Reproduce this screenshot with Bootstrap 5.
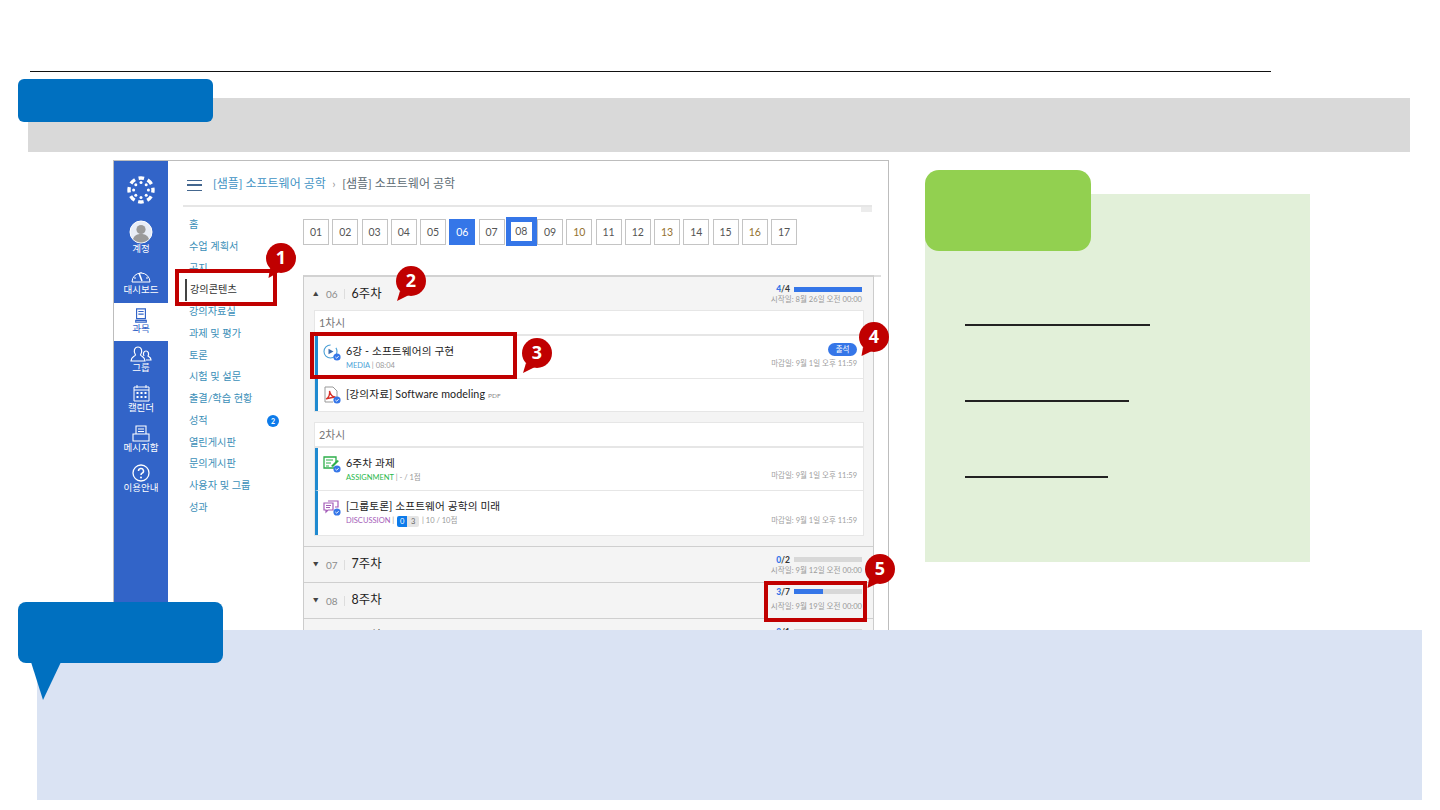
<!DOCTYPE html>
<html lang="ko">
<head>
<meta charset="utf-8">
<title>강의콘텐츠 안내</title>
<link href="https://cdn.jsdelivr.net/npm/bootstrap@5.3.0/dist/css/bootstrap.min.css" rel="stylesheet">
<style>
html,body{margin:0;background:#fff}
body{font-family:Lato,"Noto Sans CJK KR","Noto Sans",sans-serif;overflow:hidden}
.slide{width:1440px;height:810px;overflow:hidden}
.rule-top{left:30px;top:71px;width:1241px;height:1px;background:#111}
.band{left:28px;top:98px;width:1382px;height:54px;background:#d9d9d9}
.tab-blue{left:18px;top:79px;width:195px;height:43px;background:#0070c0;border-radius:6px}
.shot{left:113px;top:160px;width:776px;height:640px;border:1px solid #bdbdbd;background:#fff;overflow:hidden}
.rail{width:54px;flex:none;background:#3264c8;color:#fff;font-size:9.5px;line-height:12px;padding-top:15px;height:100%}
.rail-logo{height:44px}
.rail-item svg{display:block;flex:none}
.ri-acc{height:49px}
.ri-acc span{margin-top:-1px}
.ri-dash{height:34px}
.ri-on{height:38px;background:#fff;color:#3264c8;padding-top:5px}
.ri-grp{height:43px;padding-top:5px}
.ri-cal{height:41px}
.ri-msg{height:39px}
.rail-main{flex:1;min-width:0}
.crumb-bar{height:46px;margin-left:15px;width:689px;border-bottom:2px solid #e6e6e6;font-size:12px;line-height:18px;color:#5c6b73;padding:14px 0 0 4px;position:relative}
.crumb-bar a{color:#3f93c4;text-decoration:none}
.crumb-bar i{font-style:normal;color:#999;margin:0 6.5px}
.burger{width:15px;height:11px;margin:5px 11px 0 0;border-top:1.5px solid #44678f;border-bottom:1.5px solid #44678f}
.burger::after{content:"";display:block;height:1.5px;background:#44678f;margin-top:3.3px}
.crumb-chip{position:absolute;right:0;bottom:-7px;width:11px;height:5px;background:#ececec}
.side{width:135px;flex:none;padding:7px 0 0 17px;position:relative}
.side .nav-link{height:21.77px;padding:0 0 0 4px;line-height:21.77px;font-size:10.2px;color:#3b8fb8;position:relative}
.side .nav-link.cur{color:#333;border-left:2px solid #444;padding-left:3px}
.side .count{position:absolute;left:82px;top:5px;width:12px;height:12px;padding:0;border-radius:50%;background:#0d7bea;font-size:7px;line-height:12px}
.body-col{width:578px;flex:none;padding-top:12px}
.weeks{gap:3.25px;height:56px}
.wk{width:26px;height:26px;border:1px solid #c4c4c4;font-size:10.5px;line-height:24px;text-align:center;color:#555;background:#fff;padding:0;border-radius:0}
.wk.warm{color:#94722f}
.wk.now{background:#3576e8;border-color:#3576e8;color:#fff}
.wk.mark{box-sizing:content-box;width:21px;height:19px;border:5px solid #3576e8;margin:-2px -3px 0 -2px;line-height:19px}
.panel{width:571px;background:#f4f4f4;border-left:1px solid #ccc;border-right:1px solid #ccc;border-top:2px solid #d2d2d2;position:relative}
.panel::before{content:"";position:absolute;left:570px;top:-2px;width:7px;height:2px;background:#e0e0e0}
.wk-head{height:32px;padding:2px 11px 0 9px}
.wk-row{height:36px;border-top:1px solid #cfcfcf;padding:0 11px 0 9px}
.wk-row.spaced{margin-top:10px}
.tri{font-size:5.5px;color:#444;width:13px}
.wk-no{font-size:10px;color:#8c8c8c;padding-right:6px;border-right:1px solid #ddd;line-height:10px;margin-right:7px}
.wk-name{font-size:12.4px;color:#222}
.stat{width:100px;text-align:right}
.stat-top{gap:4px;font-size:8.5px;line-height:10px;color:#333;font-weight:700}
.stat-top b{color:#3576e8}
.stat .progress{width:68px;height:5px;border-radius:0;background:#d8d8d8}
.stat .progress-bar{background:#3576e8}
.stat small{display:block;font-size:7.6px;line-height:10px;color:#9a9a9a;white-space:nowrap}
.stat.tall{padding-bottom:4px}
.stat.tall small{margin-top:4px}
.lesson{margin:1px 10px 0 10px;width:550px;border:1px solid #e6e6e6;border-radius:0}
.lesson + .lesson{margin-top:10px}
.lesson-head{height:24px;font-size:10.8px;line-height:24px;color:#777;padding-left:4px;background:#fff;border-bottom:1px solid #e6e6e6}
.lesson .list-group-item{border-left:3px solid #1f8ad0;border-right:0;border-top:0;border-bottom:1px solid #e6e6e6;padding:0 6px 0 4px;border-radius:0;display:flex;gap:4px}
.lesson .list-group-item:last-child{border-bottom:0}
.h43{height:43px}.h32{height:32px}.h45{height:44px}
.it-icon{width:20px;height:20px;flex:none;margin-top:7px}
.it-main{flex:1;padding-top:7px}
.it-title{font-size:10.7px;line-height:15px;color:#222;letter-spacing:.1px}
.it-title small{font-size:6.5px;color:#888}
.it-meta{font-size:7.5px;line-height:15px;color:#999}
.t-media{color:#4a9fd6}.t-asg{color:#1fb84a}.t-dis{color:#a45cb8}
.cnt{display:inline-flex;vertical-align:middle;font-size:7.5px;line-height:11px;margin:0 1px}
.cnt b{background:#0d7bea;color:#fff;width:10px;text-align:center;font-weight:400;border-radius:2px 0 0 2px}
.cnt span{background:#e5e5e5;color:#666;width:12px;text-align:center;border-radius:0 2px 2px 0}
.it-side{text-align:right;align-self:flex-end;font-size:7.5px;line-height:14px;color:#a0a0a0;padding-bottom:7px;white-space:nowrap}
.attend{background:#3576e8;font-size:7.5px;line-height:10px;padding:1.500px 7.500px;display:inline-block;border-radius:8px;margin-bottom:1px;font-weight:400}
.box{border:4px solid #c00000;background:transparent}
.box1{left:175px;top:269px;width:102px;height:37px}
.box3{left:310px;top:332px;width:207px;height:47px}
.box5{left:764px;top:581px;width:103px;height:41px}
.pin{width:34px;height:42px}
.pin text{font:700 18px "Open Sans","Liberation Sans",sans-serif;fill:#fff;text-anchor:middle}
.p1{left:264px;top:241px}.p2{left:394px;top:264px}.p3{left:520px;top:336px}.p4{left:857px;top:320px}.p5{left:863px;top:552px}
.pane-green{left:925px;top:194px;width:385px;height:368px;background:#e2f0d9}
.tab-green{left:925px;top:170px;width:166px;height:81px;background:#92d050;border-radius:14px}
.stroke{left:40px;height:2px;background:#222}
.s1{top:130px;width:185px}.s2{top:206px;width:164px}.s3{top:282px;width:143px}
.pane-blue{left:37px;top:630px;width:1385px;height:170px;background:#dae3f3}
.say{left:18px;top:602px;width:205px;height:99px}
.say-box{width:205px;height:61px;background:#0070c0;border-radius:8px}
.say-tail{width:30px;height:38px;display:block;margin:-1px 0 0 13px}
</style>
</head>
<body>
<div class="slide position-relative">
  <div class="position-absolute rule-top"></div>
  <div class="position-absolute band"></div>
  <div class="position-absolute tab-blue"></div>

  <div class="position-absolute shot d-flex">
    <nav class="rail text-center">
      <div class="rail-logo d-flex justify-content-center">
        <svg width="28" height="28" viewBox="0 0 28 28"><circle cx="14" cy="14" r="12" fill="none" stroke="#fff" stroke-width="3.4" stroke-dasharray="5.6 3.82" stroke-dashoffset="2.8"/><g fill="#fff"><circle cx="14" cy="6.6" r="1.5"/><circle cx="14" cy="21.4" r="1.5"/><circle cx="6.6" cy="14" r="1.5"/><circle cx="21.4" cy="14" r="1.5"/><circle cx="8.8" cy="8.8" r="1.5"/><circle cx="19.2" cy="8.8" r="1.5"/><circle cx="8.8" cy="19.2" r="1.5"/><circle cx="19.2" cy="19.2" r="1.5"/></g></svg>
      </div>
      <div class="rail-item ri-acc d-flex flex-column align-items-center">
        <svg width="24" height="24" viewBox="0 0 24 24"><circle cx="12" cy="12" r="11" fill="#e8edf6" stroke="#fff"/><circle cx="12" cy="9.5" r="4.6" fill="#9a9a9a"/><path d="M4 19c1.5-4 4.500-5 8-5s6.500 1 8 5a11 11 0 0 1-16 0z" fill="#9a9a9a"/></svg>
        <span>계정</span>
      </div>
      <div class="rail-item ri-dash d-flex flex-column align-items-center">
        <svg width="22" height="15" viewBox="0 0 22 15"><path d="M2 13a9 9 0 1 1 18 0z" fill="none" stroke="#fff"/><path d="M9 4l3 8" stroke="#fff" stroke-width="1.5"/><path d="M4 9h2M16 9h2M11 3v1" stroke="#fff"/></svg>
        <span>대시보드</span>
      </div>
      <div class="rail-item ri-on d-flex flex-column align-items-center">
        <svg width="14" height="15" viewBox="0 0 14 17"><path d="M2 1h10v11H2zM1 14h12v2H1zM4 4h6M4 7h6" fill="none" stroke="#3264c8" stroke-width="1.3"/></svg>
        <span>과목</span>
      </div>
      <div class="rail-item ri-grp d-flex flex-column align-items-center">
        <svg width="22" height="16" viewBox="0 0 22 16"><path d="M1 15c0-4 3-4 4.500-6-2.500-4-1-8 2.500-8s5 4 2.500 8c1.500 2 4.500 2 4.500 6z" fill="none" stroke="#fff" stroke-width="1.2"/><path d="M14 10c-1.200-2-.5-5 2-5s3.200 3 2 5c1 1 3 1 3 4h-5" fill="none" stroke="#fff" stroke-width="1.2"/></svg>
        <span>그룹</span>
      </div>
      <div class="rail-item ri-cal d-flex flex-column align-items-center">
        <svg width="17" height="18" viewBox="0 0 17 18"><path d="M1 3h15v14H1zM1 6h15M4 1v3M13 1v3" fill="none" stroke="#fff"/><path d="M3.500 8h2v2h-2zM7.500 8h2v2h-2zM11.500 8h2v2h-2zM3.500 12h2v2h-2zM7.500 12h2v2h-2zM11.500 12h2v2h-2z" fill="#fff"/></svg>
        <span>캘린더</span>
      </div>
      <div class="rail-item ri-msg d-flex flex-column align-items-center">
        <svg width="18" height="17" viewBox="0 0 18 17"><path d="M4 9V1h10v8M1 9h16v7H1zM6 4h6M6 6.500h6M6 9h6" fill="none" stroke="#fff" stroke-width="1.1"/></svg>
        <span>메시지함</span>
      </div>
      <div class="rail-item d-flex flex-column align-items-center">
        <svg width="18" height="18" viewBox="0 0 18 18"><circle cx="9" cy="9" r="8" fill="none" stroke="#fff" stroke-width="1.3"/><path d="M6.500 7a2.500 2.500 0 1 1 3.600 2.200c-.8.500-1.100.9-1.100 1.800" fill="none" stroke="#fff" stroke-width="1.5"/><circle cx="9" cy="13.500" r="1" fill="#fff"/></svg>
        <span>이용안내</span>
      </div>
    </nav>

    <div class="rail-main">
      <div class="crumb-bar d-flex align-items-start">
        <span class="burger d-block"></span>
        <span><a href="#">[샘플] 소프트웨어 공학</a><i>›</i>[샘플] 소프트웨어 공학</span>
        <span class="crumb-chip"></span>
      </div>
      <div class="d-flex">
        <nav class="side nav flex-column flex-nowrap d-block">
          <a class="nav-link" href="#">홈</a>
          <a class="nav-link" href="#">수업 계획서</a>
          <a class="nav-link" href="#">공지</a>
          <a class="nav-link cur" href="#">강의콘텐츠</a>
          <a class="nav-link" href="#">강의자료실</a>
          <a class="nav-link" href="#">과제 및 평가</a>
          <a class="nav-link" href="#">토론</a>
          <a class="nav-link" href="#">시험 및 설문</a>
          <a class="nav-link" href="#">출결/학습 현황</a>
          <a class="nav-link" href="#">성적<span class="badge count">2</span></a>
          <a class="nav-link" href="#">열린게시판</a>
          <a class="nav-link" href="#">문의게시판</a>
          <a class="nav-link" href="#">사용자 및 그룹</a>
          <a class="nav-link" href="#">성과</a>
        </nav>
        <div class="body-col">
          <div class="weeks d-flex">
            <button class="wk">01</button><button class="wk">02</button><button class="wk">03</button><button class="wk">04</button><button class="wk">05</button><button class="wk now">06</button><button class="wk">07</button><button class="wk mark">08</button><button class="wk">09</button><button class="wk warm">10</button><button class="wk">11</button><button class="wk">12</button><button class="wk warm">13</button><button class="wk">14</button><button class="wk">15</button><button class="wk warm">16</button><button class="wk">17</button>
          </div>
          <div class="panel">
            <div class="wk-head d-flex align-items-center">
              <span class="tri">▲</span><span class="wk-no">06</span><span class="wk-name">6주차</span>
              <div class="stat ms-auto">
                <div class="stat-top d-flex align-items-center justify-content-end"><span><b>4</b>/4</span><div class="progress"><div class="progress-bar w-100"></div></div></div>
                <small>시작일: 8월 26일 오전 00:00</small>
              </div>
            </div>
            <div class="lesson card">
              <div class="lesson-head">1차시</div>
              <div class="list-group list-group-flush">
                <div class="list-group-item h43">
                  <svg class="it-icon" viewBox="0 0 20 20"><circle cx="8.500" cy="8.500" r="6.500" fill="none" stroke="#4a9fd6" stroke-width="1.1" stroke-dasharray="30 6"/><path d="M6.500 5.800l5 2.700-5 2.700z" fill="#3d6fb0"/><circle cx="15" cy="14" r="3.600" fill="#3576e8"/><path d="M13.400 14l1.200 1.200 2-2" stroke="#fff" fill="none"/></svg>
                  <div class="it-main"><div class="it-title">6강 - 소프트웨어의 구현</div><div class="it-meta"><span class="t-media">MEDIA</span> | 08:04</div></div>
                  <div class="it-side"><span class="badge attend">출석</span><br>마감일: 9월 1일 오후 11:59</div>
                </div>
                <div class="list-group-item h32">
                  <svg class="it-icon" viewBox="0 0 20 20"><path d="M3 1h8l4 4v8M3 1v15h8" fill="none" stroke="#999"/><path d="M4 13c3-1 4-5 3.500-8 1 4 3 6 6 6-3 0-6 1-9.500 2z" fill="none" stroke="#d7322a" stroke-width="1.300"/><circle cx="15" cy="14" r="3.600" fill="#3576e8"/><path d="M13.400 14l1.200 1.200 2-2" stroke="#fff" fill="none"/></svg>
                  <div class="it-main"><div class="it-title">[강의자료] Software modeling <small>PDF</small></div></div>
                </div>
              </div>
            </div>
            <div class="lesson card">
              <div class="lesson-head">2차시</div>
              <div class="list-group list-group-flush">
                <div class="list-group-item h43">
                  <svg class="it-icon" viewBox="0 0 20 20"><path d="M13 13H2V2h12v6" fill="none" stroke="#2dae4a" stroke-width="1.300"/><path d="M4 5h7M4 8h5M4 11h3" stroke="#2dae4a"/><path d="M9 11l6-6 2 1-6 6z" fill="#2dae4a"/><circle cx="15" cy="14" r="3.600" fill="#3576e8"/><path d="M13.400 14l1.200 1.200 2-2" stroke="#fff" fill="none"/></svg>
                  <div class="it-main"><div class="it-title">6주차 과제</div><div class="it-meta"><span class="t-asg">ASSIGNMENT</span> | - / 1점</div></div>
                  <div class="it-side">마감일: 9월 1일 오후 11:59</div>
                </div>
                <div class="list-group-item h45">
                  <svg class="it-icon" viewBox="0 0 20 20"><path d="M2 5h9v7H6l-2 2v-2H2zM6 3h10v6h-3" fill="none" stroke="#a45cb8" stroke-width="1.200"/><path d="M4 7.500h5M4 9.500h4" stroke="#a45cb8"/><circle cx="15" cy="14" r="3.600" fill="#3576e8"/><path d="M13.400 14l1.200 1.200 2-2" stroke="#fff" fill="none"/></svg>
                  <div class="it-main"><div class="it-title">[그룹토론] 소프트웨어 공학의 미래</div><div class="it-meta"><span class="t-dis">DISCUSSION</span> | <span class="cnt"><b>0</b><span>3</span></span> | 10 / 10점</div></div>
                  <div class="it-side">마감일: 9월 1일 오후 11:59</div>
                </div>
              </div>
            </div>
            <div class="wk-row spaced d-flex align-items-center">
              <span class="tri">▼</span><span class="wk-no">07</span><span class="wk-name">7주차</span>
              <div class="stat ms-auto">
                <div class="stat-top d-flex align-items-center justify-content-end"><span><b>0</b>/2</span><div class="progress"></div></div>
                <small>시작일: 9월 12일 오전 00:00</small>
              </div>
            </div>
            <div class="wk-row d-flex align-items-center">
              <span class="tri">▼</span><span class="wk-no">08</span><span class="wk-name">8주차</span>
              <div class="stat tall ms-auto">
                <div class="stat-top d-flex align-items-center justify-content-end"><span><b>3</b>/7</span><div class="progress"><div class="progress-bar" style="width:42.8%"></div></div></div>
                <small>시작일: 9월 19일 오전 00:00</small>
              </div>
            </div>
            <div class="wk-row d-flex align-items-center">
              <span class="tri">▼</span><span class="wk-no">09</span><span class="wk-name">9주차</span>
              <div class="stat ms-auto">
                <div class="stat-top d-flex align-items-center justify-content-end"><span><b>0</b>/1</span><div class="progress"></div></div>
                <small>시작일: 9월 26일 오전 00:00</small>
              </div>
            </div>
          </div>
        </div>
      </div>
    </div>
  </div>

  <div class="position-absolute box box1"></div>
  <div class="position-absolute box box3"></div>
  <div class="position-absolute box box5"></div>
  <svg class="position-absolute pin p1" viewBox="0 0 34 42"><path d="M6 27L4.500 37 15 31z" fill="#c00000"/><circle cx="17" cy="17" r="15" fill="#c00000"/><text x="17" y="23">1</text></svg>
  <svg class="position-absolute pin p2" viewBox="0 0 34 42"><path d="M6 27L3 37 15 31z" fill="#c00000"/><circle cx="17" cy="17" r="15" fill="#c00000"/><text x="17" y="23">2</text></svg>
  <svg class="position-absolute pin p3" viewBox="0 0 34 42"><path d="M6 27L3 37 15 31z" fill="#c00000"/><circle cx="17" cy="17" r="15" fill="#c00000"/><text x="17" y="23">3</text></svg>
  <svg class="position-absolute pin p4" viewBox="0 0 34 42"><path d="M6 27L4.500 36 15 31z" fill="#c00000"/><circle cx="17" cy="17" r="15" fill="#c00000"/><text x="17" y="23">4</text></svg>
  <svg class="position-absolute pin p5" viewBox="0 0 34 42"><path d="M6 27L4.500 36 15 31z" fill="#c00000"/><circle cx="17" cy="17" r="15" fill="#c00000"/><text x="17" y="23">5</text></svg>

  <div class="position-absolute pane-green">
    <div class="position-absolute stroke s1"></div>
    <div class="position-absolute stroke s2"></div>
    <div class="position-absolute stroke s3"></div>
  </div>
  <div class="position-absolute tab-green"></div>

  <div class="position-absolute pane-blue"></div>
  <div class="position-absolute say">
    <div class="say-box"></div>
    <svg class="say-tail" viewBox="0 0 30 38"><path d="M0 0h30L12 38z" fill="#0070c0"/></svg>
  </div>
</div>
<script src="https://cdn.jsdelivr.net/npm/bootstrap@5.3.0/dist/js/bootstrap.bundle.min.js"></script>
</body>
</html>
